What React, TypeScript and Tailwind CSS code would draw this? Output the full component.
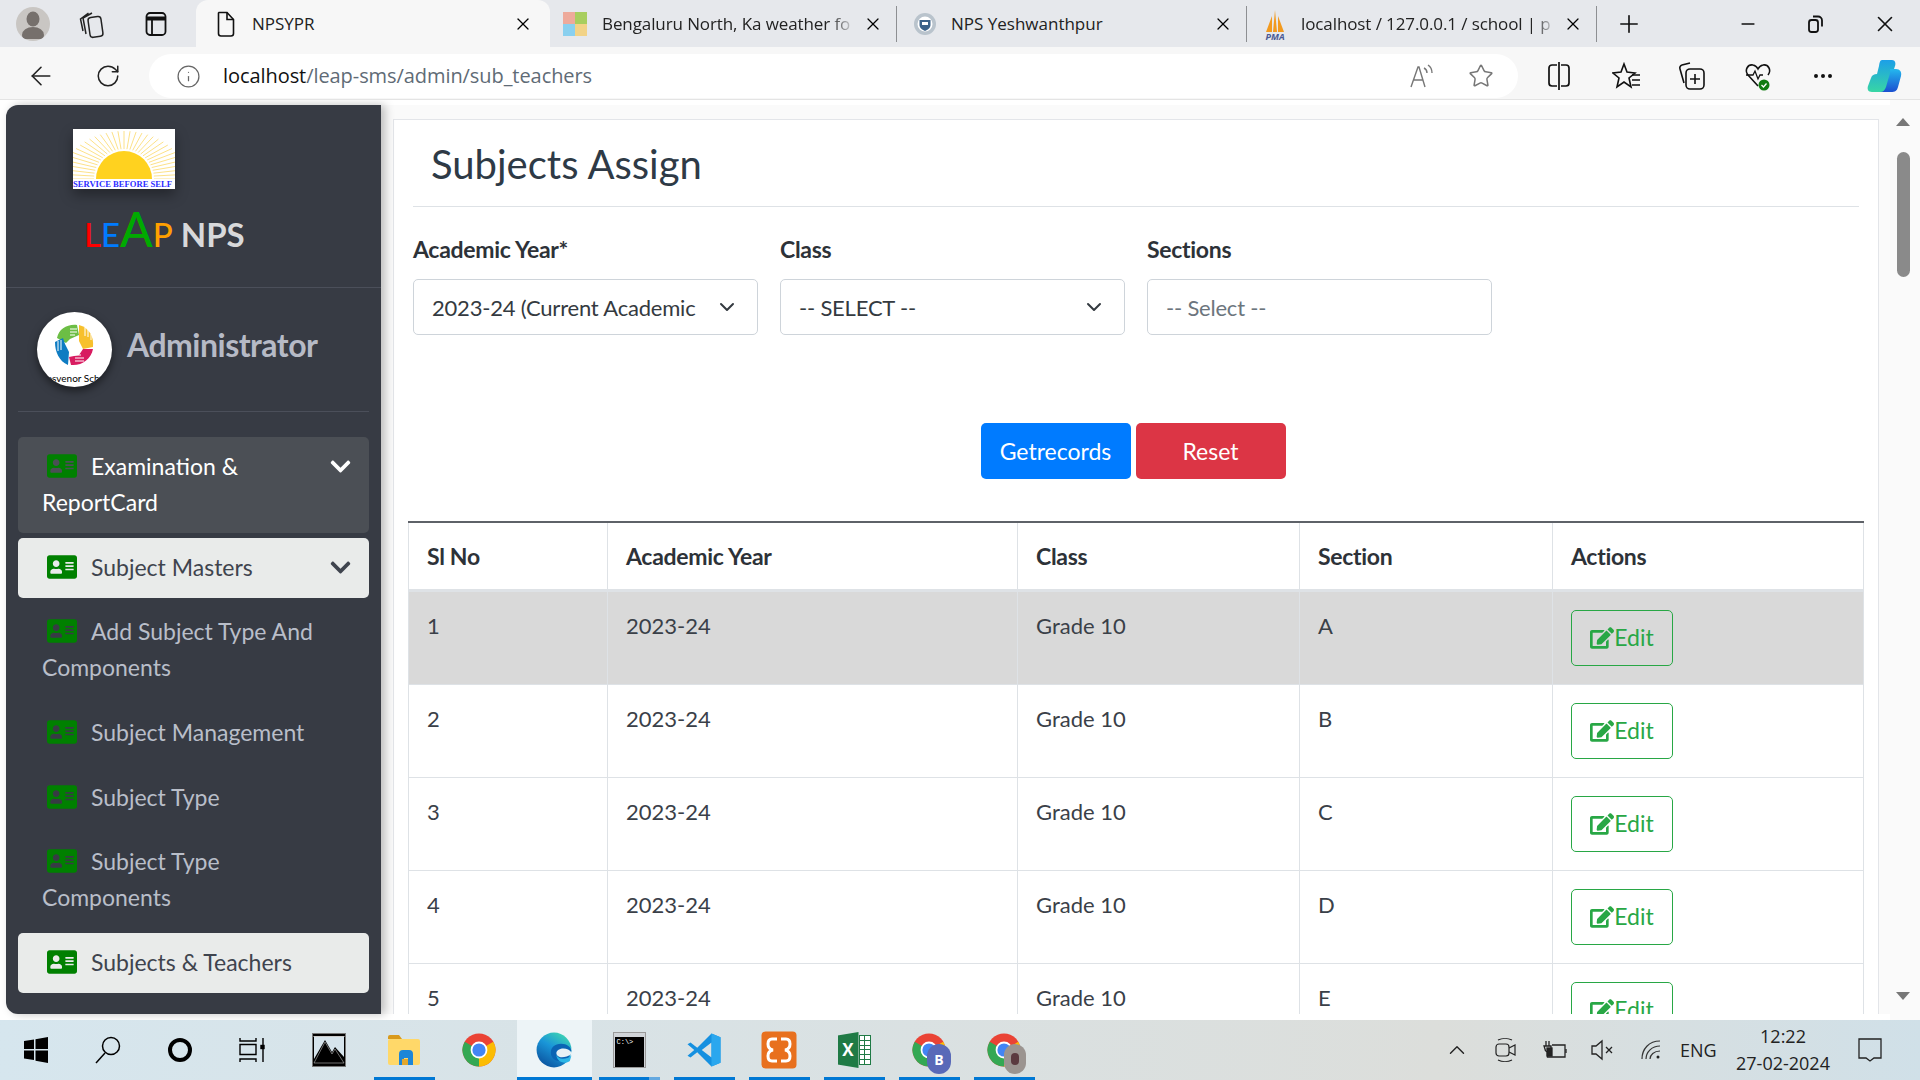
import { type ReactNode } from "react";
import { FaAddressCard, FaChevronDown, FaEdit } from "react-icons/fa";
import { ChevronDown, Ellipsis, Info, Minus, Plus, Star, X, ArrowLeft, RotateCw, ChevronUp } from "lucide-react";

const rows = ["A", "B", "C", "D", "E"];

function ChromeIcon({ size = 36 }: { size?: number }) {
  return (
    <svg width={size} height={size} viewBox="0 0 24 24">
      <circle cx="12" cy="12" r="11" fill="#ea4335" />
      <path d="M21.53 6.5A11 11 0 0 1 12 23L12 12Z" fill="#fbbc04" />
      <path d="M12 23A11 11 0 0 1 2.47 6.5L12 12Z" fill="#34a853" />
      <circle cx="12" cy="12" r="5.6" fill="#fff" />
      <circle cx="12" cy="12" r="4.4" fill="#4285f4" />
    </svg>
  );
}

function EdgeIcon() {
  return (
    <svg width="38" height="38" viewBox="0 0 24 24">
      <defs>
        <linearGradient id="edgeA" x1="0.8" y1="0" x2="0.2" y2="1">
          <stop offset="0" stopColor="#3fd8b0" />
          <stop offset="0.45" stopColor="#1a96d8" />
          <stop offset="1" stopColor="#0a4f9c" />
        </linearGradient>
      </defs>
      <circle cx="12" cy="12" r="11" fill="url(#edgeA)" />
      <path d="M23 13c0-3-3-5-6.500-5-4 0-6.500 2.500-6.500 5.500 0 3.500 3 5.500 6 5.500 2 0 4-.7 5.500-2.200V13Z" fill="#0b64b4" />
      <path d="M23 13.500c-1-1.500-3-2.500-5-2.500-3 0-4.500 1.500-4.500 3s1.500 2.500 3.500 2.500 4-.6 6-2Z" fill="#e7f1f5" />
      <path d="M23 15.500c-1.500 1.500-3.500 2-5.500 2-2 0-3.500-1-4-2.500 0 3 2.500 5 5.500 5 1.500 0 2.500-.5 3-1Z" fill="#2cb6e6" />
    </svg>
  );
}

function TaskSlot({ children, bar, active, split }: { children: ReactNode; bar?: boolean; active?: boolean; split?: boolean }) {
  return (
    <div className={`relative w-[75px] h-full flex items-center justify-center ${active ? "bg-[#edf4f7]" : ""}`}>
      {children}
      {bar && <div className="absolute bottom-0 left-[7px] right-[7px] h-[3px] bg-[#0078d4]" />}
      {active && <div className="absolute bottom-0 inset-x-0 h-[3px] bg-[#0078d4]" />}
      {split && <div className="absolute bottom-0 right-[7px] w-[11px] h-[3px] bg-[#64a9e0]" />}
    </div>
  );
}

function TabClose({ className = "" }: { className?: string }) {
  return <X size={20} strokeWidth={1.5} className={`text-black shrink-0 ${className}`} />;
}

function Tabs() {
  return (
    <div className="h-[47px] bg-[#e6e8ec] flex items-end text-[17px] text-[#222] shrink-0 [font-family:'Open_Sans',sans-serif]">
      <div className="w-[196px] h-full flex items-center shrink-0">
        <div className="ml-[16px] w-[34px] h-[34px] rounded-full bg-[#c9c6c3] flex items-center justify-center overflow-hidden shrink-0">
          <svg width="22" height="30" viewBox="0 0 22 30">
            <ellipse cx="11" cy="10" rx="6.500" ry="7.500" fill="#76706c" />
            <ellipse cx="11" cy="26" rx="11" ry="8" fill="#76706c" />
          </svg>
        </div>
        <svg className="ml-[29px] shrink-0" width="26" height="30" viewBox="0 0 26 30" fill="none" stroke="#222" strokeWidth="1.500">
          <rect x="10" y="8" width="13" height="20" rx="3" transform="rotate(-8 16 18)" />
          <path d="M7 25 4 9l9-5M4 22 1.500 10l8-6" />
        </svg>
        <svg className="ml-[39px] shrink-0" width="24" height="26" viewBox="0 0 24 26" fill="none" stroke="#111" strokeWidth="1.800">
          <rect x="2.500" y="2" width="19" height="22" rx="3.500" />
          <path d="M2.500 7.500h19" strokeWidth="4" />
          <path d="M8 8v16" />
        </svg>
      </div>

      <div className="w-[354px] h-full bg-[#f7f7f7] rounded-t-[12px] flex items-center shrink-0 pl-[20px] pr-[17px]">
        <svg width="20" height="26" viewBox="0 0 20 26" fill="none" stroke="#111" strokeWidth="1.600">
          <path d="M3 1.500h8l6.500 7v14a2.500 2.500 0 0 1-2.500 2.500H5a2.500 2.500 0 0 1-2.500-2.500V2Z" />
          <path d="M11 1.500v7h6.500" />
        </svg>
        <span className="ml-[16px] flex-1">NPSYPR</span>
        <TabClose />
      </div>

      <div className="w-[346px] h-full flex items-center shrink-0 pl-[13px] pr-[13px]">
        <div className="grid grid-cols-2 w-[24px] h-[24px] shrink-0">
          <span className="bg-[#eeaa9b]" />
          <span className="bg-[#a8ce5f]" />
          <span className="bg-[#8ad0ef]" />
          <span className="bg-[#f2d387]" />
        </div>
        <span className="ml-[15px] flex-1 whitespace-nowrap tracking-[-0.1px] [mask-image:linear-gradient(to_right,black_90%,transparent)]">
          Bengaluru North, Ka weather fo
        </span>
        <TabClose className="ml-[8px]" />
      </div>

      <div className="h-[36px] w-px bg-[#8d8f92] self-center shrink-0" />

      <div className="w-[349px] h-full flex items-center shrink-0 pl-[16px] pr-[13px]">
        <svg width="24" height="24" viewBox="0 0 24 24" className="shrink-0">
          <circle cx="12" cy="12" r="11" fill="#b9c3cc" />
          <circle cx="12" cy="12" r="7.500" fill="#fff" />
          <path d="M6.500 8h11v5c0 3-3 5-5.500 6-2.500-1-5.500-3-5.500-6Z" fill="#3c6289" />
          <path d="M9 10h6v3H9Z" fill="#fff" />
        </svg>
        <span className="ml-[14px] flex-1 whitespace-nowrap">NPS Yeshwanthpur</span>
        <TabClose />
      </div>

      <div className="h-[36px] w-px bg-[#8d8f92] self-center shrink-0" />

      <div className="w-[349px] h-full flex items-center shrink-0 pl-[15px] pr-[13px]">
        <div className="w-[26px] h-[34px] shrink-0 flex flex-col items-center justify-end">
          <svg width="24" height="22" viewBox="0 0 24 22">
            <path d="M3 22 9 6v16ZM10 22 12 0l2 22ZM15 6l6 16h-6Z" fill="#f29a1f" />
          </svg>
          <span className="text-[9px] leading-[9px] font-bold italic text-[#4a5a94]">PMA</span>
        </div>
        <span className="ml-[13px] flex-1 whitespace-nowrap tracking-[-0.1px] [mask-image:linear-gradient(to_right,black_92%,transparent)]">
          localhost / 127.0.0.1 / school | p
        </span>
        <TabClose className="ml-[8px]" />
      </div>

      <div className="h-[36px] w-px bg-[#8d8f92] self-center shrink-0" />

      <div className="flex-1 h-full flex items-center text-[#111]">
        <Plus size={28} strokeWidth={1.4} className="ml-[18px]" />
        <Minus size={20} strokeWidth={2} className="ml-[95px]" />
        <svg className="ml-[47px]" width="22" height="22" viewBox="0 0 22 22" fill="none" stroke="#111" strokeWidth="1.800">
          <rect x="4" y="7" width="9" height="12" rx="2.500" />
          <path d="M8 3.500h5a4 4 0 0 1 4 4v6" />
        </svg>
        <X size={26} strokeWidth={1.5} className="ml-[45px]" />
      </div>
    </div>
  );
}

function Toolbar() {
  return (
    <div className="h-[53px] bg-[#f7f7f7] flex items-center pt-[6px] text-[#222] shrink-0 [font-family:'Open_Sans',sans-serif] border-b border-[#e4e4e4]">
      <ArrowLeft size={30} strokeWidth={1.3} className="ml-[26px] shrink-0" />
      <RotateCw size={26} strokeWidth={1.4} className="ml-[39px] shrink-0" />
      <div className="ml-[28px] w-[1369px] h-[44px] bg-white rounded-full flex items-center shrink-0">
        <Info size={25} strokeWidth={1.2} className="ml-[27px] text-[#666]" />
        <span className="ml-[22px] flex-1 text-[20px] tracking-[-0.07px] text-[#111]">
          localhost<span className="text-[#5f6b76]">/leap-sms/admin/sub_teachers</span>
        </span>
        <div className="flex items-center text-[#777] mr-[24px]">
          <svg width="28" height="28" viewBox="0 0 28 28" fill="none" stroke="#777" strokeWidth="1.400">
            <path d="M3 25 10 5h1l6 20M5.500 18h10" />
            <path d="M16 6c2 1 3 3 3 5M20 3c3 2 4 5 4 8" />
          </svg>
          <Star size={26} strokeWidth={1.4} className="ml-[32px]" />
        </div>
      </div>
      <svg className="ml-[28px] shrink-0" width="26" height="28" viewBox="0 0 26 28" fill="none" stroke="#111" strokeWidth="1.700">
        <path d="M11 3H6a3 3 0 0 0-3 3v15a3 3 0 0 0 3 3h5M15 3h5a3 3 0 0 1 3 3v15a3 3 0 0 1-3 3h-5M13 0v28" />
      </svg>
      <svg className="ml-[40px] shrink-0" width="30" height="28" viewBox="0 0 30 28" fill="none" stroke="#111" strokeWidth="1.600">
        <path d="M12 2l3 8 8 1-6 5 2 9-7-5-7 5 2-9-6-5 8-1Z" />
        <path d="M20 13h8M20 18h8M20 23h8" />
      </svg>
      <svg className="ml-[36px] shrink-0" width="28" height="30" viewBox="0 0 28 30" fill="none" stroke="#111" strokeWidth="1.600">
        <path d="M6 22 2 8a3 3 0 0 1 2-4l8-2" />
        <rect x="8" y="8" width="18" height="20" rx="4" />
        <path d="M17 13v10M12 18h10" />
      </svg>
      <svg className="ml-[38px] shrink-0" width="28" height="30" viewBox="0 0 28 30" fill="none">
        <path d="M14 25 4 14C0 9 4 3 9 4c3 .5 4 2 5 4 1-2 2-3.500 5-4 5-1 9 5 5 10" stroke="#111" strokeWidth="1.600" />
        <path d="M2 14h7l2-4 3 8 2-4h3" stroke="#111" strokeWidth="1.300" />
        <circle cx="20" cy="24" r="5.500" fill="#107c10" />
        <path d="m17.500 24 2 2 3-3.500" stroke="#fff" strokeWidth="1.300" />
      </svg>
      <Ellipsis size={24} strokeWidth={2} className="ml-[39px] text-[#111] shrink-0" />
      <svg className="ml-[31px] shrink-0" width="38" height="38" viewBox="0 0 38 38">
        <defs>
          <linearGradient id="copA" x1="0" y1="0" x2="0" y2="1">
            <stop offset="0" stopColor="#1c9fe8" />
            <stop offset="1" stopColor="#38d6a4" />
          </linearGradient>
          <linearGradient id="copB" x1="0" y1="0" x2="0" y2="1">
            <stop offset="0" stopColor="#24b8ee" />
            <stop offset="1" stopColor="#1a4fd0" />
          </linearGradient>
        </defs>
        <path d="M16 3h10c3 0 4 3 3 6l-7 21c-1 3-3 5-6 5H6c-4 0-5-3-4-6l3-8c1-3 3-4 6-4l2-8c.5-3 1-6 3-6Z" fill="url(#copA)" />
        <path d="M24 12h6c4 0 6 3 5 7l-3 11c-1 4-3 5-7 5H14c3 0 5-2 6-5l4-14Z" fill="url(#copB)" />
      </svg>
    </div>
  );
}

function NavItem({ label, state, chevron }: { label: string; state?: "open" | "active"; chevron?: boolean }) {
  const tone =
    state === "open"
      ? "bg-[#4b4f55] text-white"
      : state === "active"
        ? "bg-[#e9ebea] text-[#3f444e]"
        : "text-[#b9bec9]";
  return (
    <div className={`rounded-[5px] pt-[11px] pb-[13px] pl-[24px] pr-[20px] text-[23px] leading-[36px] ${tone}`}>
      {chevron && <FaChevronDown size={23} className="float-right mt-[7px] -mr-[3px]" />}
      <FaAddressCard size={30} className="inline-block align-[-6px] ml-[5px] mr-[14px] text-[#008000]" />
      {label}
    </div>
  );
}

function Sidebar() {
  return (
    <div className="ml-[6px] mt-[5px] w-[375px] h-[909px] shrink-0 bg-[#373b44] rounded-l-[12px] shadow-[4px_0_10px_rgba(0,0,0,0.25)] overflow-hidden z-10">
      <div className="h-[183px] border-b border-[#4b4f5a] pt-[24px]">
        <div className="ml-[67px] w-[102px] h-[60px] bg-white shadow-[0_6px_12px_rgba(0,0,0,0.35)] flex flex-col overflow-hidden">
          <svg width="102" height="50" viewBox="0 0 102 50" className="shrink-0">
            <g stroke="#fbd96a" strokeWidth="0.800">
              {Array.from({ length: 33 }, (_, i) => {
                const a = (Math.PI * i) / 32;
                return <line key={i} x1={51 + Math.cos(a) * 30} y1={50 - Math.sin(a) * 30} x2={51 + Math.cos(a) * 62} y2={50 - Math.sin(a) * 48} />;
              })}
            </g>
            <path d="M23 50a28 28 0 0 1 56 0Z" fill="#ffd21f" />
          </svg>
          <span className="text-[8.600px] leading-[11px] font-bold text-[#2b2bff] whitespace-nowrap [font-family:'Liberation_Serif',serif]">SERVICE BEFORE SELF</span>
        </div>
        <div className="ml-[78px] mt-[15px] h-[50px] flex items-baseline text-[33px] leading-[50px]">
          <span className="text-[#ff0000] font-medium">L</span>
          <span className="text-[#007bff] font-medium">E</span>
          <span className="text-[#00aa00] text-[48px] leading-[50px] font-medium">A</span>
          <span className="text-[#ffa000] font-medium">P</span>
          <span className="ml-[8px] font-bold text-[#d8d9db] text-[33px]">NPS</span>
        </div>
      </div>

      <div className="mx-[12px] h-[124px] border-b border-[#4b4f5a] flex items-start pt-[24px] pl-[19px]">
        <div className="w-[75px] h-[75px] rounded-full bg-white shadow-[0_4px_8px_rgba(0,0,0,0.5)] flex flex-col items-center overflow-hidden shrink-0">
          <svg className="mt-[12px] shrink-0" width="40" height="44" viewBox="0 0 40 44">
            <path d="M2 14C4 5 12 0 22 1l2 10-9 4-4 4Z" fill="#6cbe45" />
            <path d="M24 1c10 3 15 11 14 22l-10 2-4-8Z" fill="#f7c02c" />
            <path d="M38 25c-2 10-11 17-22 16l-2-8 10-2 4-6Z" fill="#d81b60" />
            <path d="M13 41C4 37 0 28 0 18l8-4 2 6 4 8Z" fill="#0f7cc2" />
            <path d="M15 5h7M15 8h7M15 11h5M30 4v8M33 6v7M36 10v6M20 37h9M20 34h9M19 31h7M3 17v10M6 16v10" stroke="#fff" strokeWidth="1" fill="none" />
          </svg>
          <span className="text-[10px] leading-[12px] mt-[4px] text-black whitespace-nowrap">Grosvenor School</span>
        </div>
        <span className="ml-[15px] mt-[11px] text-[32px] leading-[44px] font-bold text-[#b6bac6] tracking-[-0.5px]">Administrator</span>
      </div>

      <nav className="mx-[12px] mt-[25px] flex flex-col gap-[4.670px]">
        <NavItem label="Examination & ReportCard" state="open" chevron />
        <NavItem label="Subject Masters" state="active" chevron />
        <NavItem label="Add Subject Type And Components" />
        <NavItem label="Subject Management" />
        <NavItem label="Subject Type" />
        <NavItem label="Subject Type Components" />
        <NavItem label="Subjects & Teachers" state="active" />
      </nav>
    </div>
  );
}

function Field({ label, value, select, muted }: { label: string; value: string; select?: boolean; muted?: boolean }) {
  return (
    <div className="w-[345px]">
      <div className="text-[23px] leading-[36px] font-bold text-[#2d3238] tracking-[-0.3px]">{label}</div>
      <div className="mt-[12px] h-[56px] bg-white border border-[#ced4da] rounded-[5px] flex items-center pl-[18px] pr-[18px]">
        <span className={`flex-1 whitespace-nowrap text-[22px] tracking-[-0.2px] ${muted ? "text-[#6c757d]" : "text-[#343a40]"}`}>{value}</span>
        {select && <ChevronDown size={24} strokeWidth={2} className="ml-[6px] shrink-0 text-[#343a40]" />}
      </div>
    </div>
  );
}

function Content() {
  return (
    <div className="flex-1 min-w-0 h-[909px] mt-[5px] pl-[12px] pr-[11px] bg-[#fafafa]">
      <div className="mt-[14px] h-[895px] bg-white border border-b-0 border-[#e3e5e9] px-[19px] pt-[20px] overflow-hidden">
        <div className="border-b border-[#dee2e6] pb-[18px] pl-[18px] text-[40px] leading-[48px] text-[#2e3a46]">Subjects Assign</div>

        <div className="mt-[24px] flex gap-[22px]">
          <Field label="Academic Year*" value="2023-24 (Current Academic" select />
          <Field label="Class" value="-- SELECT --" select />
          <Field label="Sections" value="-- Select --" muted />
        </div>

        <div className="mt-[88px] flex justify-center gap-[5px] pr-[6px]">
          <div className="w-[150px] h-[56px] rounded-[5px] bg-[#007bff] text-white text-[23px] flex items-center justify-center">Getrecords</div>
          <div className="w-[150px] h-[56px] rounded-[5px] bg-[#dc3545] text-white text-[23px] flex items-center justify-center">Reset</div>
        </div>

        <table className="mt-[42px] -ml-[5px] w-[1455px] table-fixed border-collapse border-t-2 border-[#5e6268] text-[22px] text-[#3a4048]">
          <colgroup>
            <col className="w-[199px]" />
            <col className="w-[410px]" />
            <col className="w-[282px]" />
            <col className="w-[253px]" />
            <col className="w-[311px]" />
          </colgroup>
          <thead>
            <tr className="h-[68px] border-b-[3px] border-[#dee2e6] text-left text-[23px]">
              {["Sl No", "Academic Year", "Class", "Section", "Actions"].map((h) => (
                <th key={h} className="px-[18px] font-bold text-[#2d3238] border-x border-[#dee2e6] tracking-[-0.3px]">
                  {h}
                </th>
              ))}
            </tr>
          </thead>
          <tbody>
            {rows.map((section, i) => (
              <tr key={section} className={`border-b border-[#dee2e6] ${i === 0 ? "bg-[#d9d9d9]" : ""}`}>
                {[String(i + 1), "2023-24", "Grade 10", section].map((cell, j) => (
                  <td key={j} className="px-[18px] pt-[16px] pb-[21px] align-top leading-[36px] border-x border-[#dee2e6]">
                    {cell}
                  </td>
                ))}
                <td className="px-[18px] pt-[18px] pb-[18px] align-top border-x border-[#dee2e6]">
                  <div className="w-[102px] h-[56px] border border-[#28a745] rounded-[5px] flex items-center justify-center text-[#28a745] text-[23px]">
                    <FaEdit size={24} />
                    Edit
                  </div>
                </td>
              </tr>
            ))}
          </tbody>
        </table>
      </div>
    </div>
  );
}

function Scrollbar() {
  return (
    <div className="w-[30px] shrink-0 h-full bg-[#fafafa] flex flex-col items-center pt-[18px] pr-[4px]">
      <div className="w-0 h-0 border-x-[7px] border-x-transparent border-b-[8px] border-b-[#777]" />
      <div className="mt-[26px] w-[13px] h-[125px] rounded-full bg-[#8a8a8a]" />
      <div className="mt-[715px] w-0 h-0 border-x-[7px] border-x-transparent border-t-[8px] border-t-[#777]" />
    </div>
  );
}

function Taskbar() {
  return (
    <div className="h-[60px] shrink-0 bg-gradient-to-r from-[#d6e6ee] via-[#dcdedb] via-[75%] to-[#d0e0e8] flex items-stretch text-[#222] [font-family:'Open_Sans',sans-serif]">
      <div className="w-[72px] flex items-center justify-center">
        <svg width="26" height="26" viewBox="0 0 26 26" fill="#000">
          <path d="M1 4l10-1.500V12H1ZM12.500 2.300 25 0v12H12.500ZM1 13.500h10V23L1 21.500ZM12.500 13.500H25V26l-12.500-2.300Z" />
        </svg>
      </div>
      <div className="w-[72px] flex items-center justify-center">
        <svg width="26" height="28" viewBox="0 0 26 28" fill="none" stroke="#000" strokeWidth="1.500">
          <circle cx="16" cy="10" r="8.500" />
          <path d="M10 17 1 27" />
        </svg>
      </div>
      <div className="w-[72px] flex items-center justify-center">
        <div className="w-[24px] h-[24px] rounded-full border-[4px] border-black" />
      </div>
      <div className="w-[72px] flex items-center justify-center">
        <svg width="26" height="26" viewBox="0 0 26 26" fill="none" stroke="#000" strokeWidth="1.400">
          <path d="M1 1v3h16V1M1 7.500h16v10H1ZM1 25v-3h16v3M24 1v7M24 12v13" />
          <rect x="22" y="8.500" width="3" height="3" fill="#000" />
        </svg>
      </div>
      <div className="w-[3.500px]" />
      <TaskSlot>
        <svg width="34" height="34" viewBox="0 0 34 34">
          <rect x="0.500" y="0.500" width="33" height="33" fill="#000" stroke="#777" />
          <rect x="1.500" y="3" width="31" height="1" fill="#fff" opacity="0.8" />
          <path d="M2 30 13 9l7 12 3-5 9 14Z" fill="#000" stroke="#ddd" strokeWidth="0.500" />
          <path d="M2 4h30v20l-9-10-3 5-7-12L2 26Z" fill="#d6e4ec" />
        </svg>
      </TaskSlot>
      <TaskSlot bar>
        <svg width="34" height="32" viewBox="0 0 34 32">
          <path d="M1 3a2 2 0 0 1 2-2h9l3 4h-14Z" fill="#d99a1c" />
          <rect x="1" y="5" width="32" height="26" rx="2" fill="#ffd869" />
          <path d="M12 31V20a4 4 0 0 1 4-4h6a4 4 0 0 1 4 4v11h-5v-7h-4v7Z" fill="#1c86d8" />
          <rect x="15" y="25" width="6" height="6" fill="#e2a72c" />
        </svg>
      </TaskSlot>
      <TaskSlot>
        <ChromeIcon />
      </TaskSlot>
      <TaskSlot active>
        <EdgeIcon />
      </TaskSlot>
      <TaskSlot bar split>
        <div className="w-[33px] h-[36px] bg-[#d0d4d8] border border-[#999] pt-[4px] px-[1px]">
          <div className="w-full h-full bg-black text-[7px] leading-[10px] text-white pl-[2px] [font-family:'Liberation_Mono',monospace]">C:\&gt;</div>
        </div>
      </TaskSlot>
      <TaskSlot bar>
        <svg width="36" height="36" viewBox="0 0 24 24">
          <path fillRule="evenodd" d="M17 1 7.500 10.500 3 7 1 8.200 5.500 12 1 15.800 3 17l4.500-3.500L17 23l6-2.500v-17ZM17 7v10l-6.500-5Z" fill="#1590e0" />
          <path d="M17 1 23 3.500v17L17 23Z" fill="#2aa7ee" />
        </svg>
      </TaskSlot>
      <TaskSlot bar>
        <svg width="36" height="38" viewBox="0 0 36 38">
          <rect x="0.500" y="0.500" width="35" height="37" rx="4" fill="#e8701e" />
          <path d="M16 8H11Q7 8 7 13Q7 18 12 19Q7 20 7 25Q7 30 11 30H16M20 8H25Q29 8 29 13Q29 18 24 19Q29 20 29 25Q29 30 25 30H20" fill="none" stroke="#fff" strokeWidth="3" />
        </svg>
      </TaskSlot>
      <TaskSlot bar>
        <div className="flex items-center">
          <div className="w-[21px] h-[36px] bg-[#1f7a45] text-white text-[17px] font-bold flex items-center justify-center [clip-path:polygon(0_10%,100%_0,100%_100%,0_90%)]">X</div>
          <div className="w-[12px] h-[30px] grid grid-cols-2 gap-px bg-[#1f7a45] p-px">
            {Array.from({ length: 12 }, (_, i) => (
              <span key={i} className="bg-white" />
            ))}
          </div>
        </div>
      </TaskSlot>
      <TaskSlot bar>
        <div className="relative">
          <ChromeIcon />
          <div className="absolute -right-[4px] -bottom-[6px] w-[24px] h-[30px] rounded-full bg-[#5969b8] text-white text-[14px] font-bold flex items-center justify-center">B</div>
        </div>
      </TaskSlot>
      <TaskSlot bar>
        <div className="relative">
          <ChromeIcon />
          <div className="absolute -right-[4px] -bottom-[6px] w-[22px] h-[30px] rounded-full bg-[#9b9490] flex items-center justify-center">
            <div className="w-[8px] h-[12px] rounded-full bg-[#5b3a3f]" />
          </div>
        </div>
      </TaskSlot>

      <div className="flex-1 flex items-center justify-end">
        <ChevronUp size={26} strokeWidth={1.3} />
        <svg className="ml-[24px]" width="24" height="26" viewBox="0 0 24 26" fill="none" stroke="#222" strokeWidth="1.200">
          <rect x="2" y="7" width="13" height="12" rx="3" />
          <path d="m15 11 6-3v10l-6-3M4 3c4-2 10-2 14 0M4 23c4 2 10 2 14 0" />
        </svg>
        <svg className="ml-[23px]" width="26" height="20" viewBox="0 0 26 20" fill="none" stroke="#222" strokeWidth="1.300">
          <path d="M5 1v5M8 1v5M3 6h7v3a3 3 0 0 1-6 0ZM6.500 12v5H24V5H11" />
          <rect x="6" y="8" width="5" height="8" fill="#222" />
          <path d="M25 9v4" />
        </svg>
        <svg className="ml-[24px]" width="24" height="22" viewBox="0 0 24 22" fill="none" stroke="#222" strokeWidth="1.300">
          <path d="M1 7h4l6-5v18l-6-5H1ZM15 8l6 6M21 8l-6 6" />
        </svg>
        <svg className="ml-[26px]" width="20" height="20" viewBox="0 0 20 20" fill="none" stroke="#333" strokeWidth="1.200">
          <path d="M1 19C1 9 8 1 19 1M5 19c0-7 6-13 14-13M9 19c0-4 4-8 10-8" />
          <circle cx="17" cy="17" r="1.500" fill="#222" stroke="none" />
        </svg>
        <span className="ml-[19px] w-[39px] text-[18px]">ENG</span>
        <div className="ml-[16px] w-[96px] text-center text-[18px] leading-[27px] whitespace-nowrap">
          <div>12:22</div>
          <div>27-02-2024</div>
        </div>
        <svg className="ml-[26px] mr-[37px]" width="26" height="26" viewBox="0 0 26 26" fill="none" stroke="#222" strokeWidth="1.300">
          <path d="M2 2h22v19h-7l-4 3-4-3H2Z" />
        </svg>
      </div>
    </div>
  );
}

export default function App() {
  return (
    <div className="w-[1920px] h-[1080px] overflow-hidden flex flex-col bg-white [font-family:Lato,sans-serif]">
      <Tabs />
      <Toolbar />
      <div className="flex-1 min-h-0 flex bg-white overflow-hidden">
        <Sidebar />
        <Content />
        <Scrollbar />
      </div>
      <Taskbar />
    </div>
  );
}
